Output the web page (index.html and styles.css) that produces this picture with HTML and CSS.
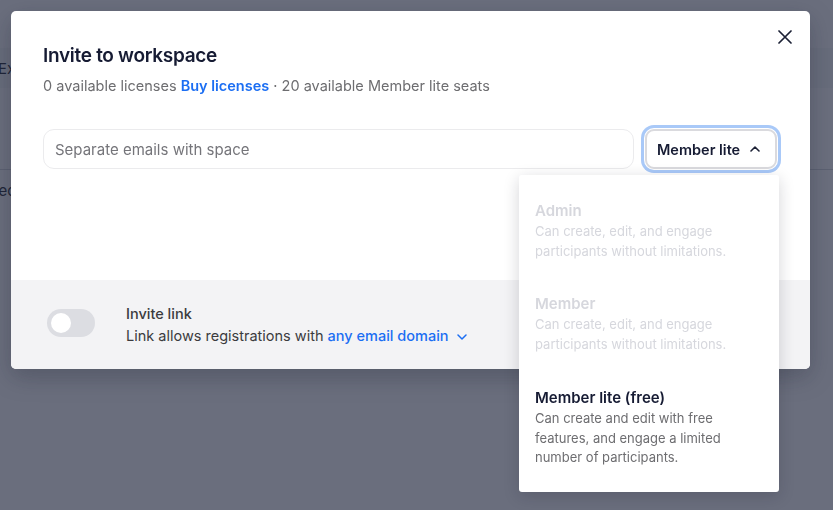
FILE: index.html
```html
<!DOCTYPE html>
<html lang="en">
<head>
<meta charset="utf-8">
<title>Invite to workspace</title>
<link rel="stylesheet" href="styles.css">
</head>
<body>
<div class="page">
  <div class="page-toolbar"><span class="page-text">Export</span></div>
  <div class="page-spacer"></div>
  <div class="page-row"><span class="page-text shifted">Recent</span></div>
</div>
<div class="overlay"></div>

<div class="modal" role="dialog" aria-label="Invite to workspace">
  <div class="modal-body">
    <div class="modal-head">
      <h1 class="title">Invite to workspace</h1>
      <button class="close" aria-label="Close">
        <svg width="14" height="14" viewBox="0 0 14 14"><path d="M1 1L13 13M13 1L1 13" stroke="#1c2135" stroke-width="1.7" stroke-linecap="round"/></svg>
      </button>
    </div>
    <p class="subtitle">0 available licenses <a class="link" href="#">Buy licenses</a> · 20 available Member lite seats</p>
    <div class="invite-row">
      <input class="email-input" type="text" placeholder="Separate emails with space">
      <button class="role-btn">
        <span>Member lite</span>
        <svg width="10" height="6" viewBox="0 0 10 6"><path d="M1 5L5 1L9 5" fill="none" stroke="#1c2135" stroke-width="1.6" stroke-linecap="round" stroke-linejoin="round"/></svg>
      </button>
    </div>
  </div>
  <div class="modal-footer">
    <span class="toggle"><span class="knob"></span></span>
    <div class="link-info">
      <div class="link-title">Invite link</div>
      <div class="link-desc">Link allows registrations with <a class="link" href="#">any email domain</a>
        <svg class="chev" width="10" height="6" viewBox="0 0 10 6"><path d="M1 1L5 5L9 1" fill="none" stroke="#1b6ef3" stroke-width="1.5" stroke-linecap="round" stroke-linejoin="round"/></svg>
      </div>
    </div>
  </div>
</div>

<div class="menu" role="listbox">
  <div class="menu-item disabled">
    <div class="item-title">Admin</div>
    <div class="item-desc">Can create, edit, and engage participants without limitations.</div>
  </div>
  <div class="menu-item disabled">
    <div class="item-title">Member</div>
    <div class="item-desc">Can create, edit, and engage participants without limitations.</div>
  </div>
  <div class="menu-item">
    <div class="item-title">Member lite (free)</div>
    <div class="item-desc">Can create and edit with free features, and engage a limited number of participants.</div>
  </div>
</div>
</body>
</html>
```

FILE: styles.css
```css
* { box-sizing: border-box; }
html, body { margin: 0; padding: 0; }
body {
  width: 833px;
  height: 510px;
  overflow: hidden;
  font-family: Inter, "Noto Sans", sans-serif;
  background: #ffffff;
}

.page {
  height: 510px;
  display: flex;
  flex-direction: column;
  background: #f4f5f7;
}
.page-toolbar {
  margin-top: 48px;
  height: 40px;
  display: flex;
  align-items: center;
  background: #eceef2;
}
.page-text {
  font-size: 15px;
  color: #101426;
  margin-left: -2px;
  white-space: nowrap;
}
.page-text.shifted { margin-left: -11px; }
.page-spacer {
  height: 82px;
  border-bottom: 1px solid #c9ccd4;
}
.page-row {
  height: 40px;
  display: flex;
  align-items: center;
}

.overlay {
  position: fixed;
  inset: 0;
  background: rgba(40, 46, 66, 0.68);
}

.modal {
  position: fixed;
  left: 11px;
  top: 11px;
  width: 799px;
  height: 358px;
  background: #fff;
  border-radius: 5px;
  overflow: hidden;
  display: flex;
  flex-direction: column;
  box-shadow: 0 8px 24px rgba(20, 24, 40, 0.25);
}
.modal-body {
  flex: 1;
  padding: 31px 32px 0 32px;
}
.modal-head {
  display: flex;
  justify-content: space-between;
  align-items: flex-start;
}
.title {
  margin: 0;
  font-size: 19px;
  line-height: 28px;
  font-weight: 600;
  color: #161b33;
  letter-spacing: -0.3px;
}
.close {
  border: 0;
  background: none;
  padding: 0;
  margin: -21px -27px 0 0;
  width: 40px;
  height: 32px;
  display: flex;
  align-items: center;
  justify-content: center;
}
.subtitle {
  margin: 5px 0 0 0;
  font-size: 14.5px;
  line-height: 22px;
  color: #6d6d70;
}
.link {
  color: #1b6ef3;
  font-weight: 600;
  text-decoration: none;
}

.invite-row {
  margin-top: 32px;
  display: flex;
  gap: 11px;
  align-items: center;
}
.email-input {
  flex: 1;
  min-width: 0;
  height: 40px;
  border: 1.5px solid #ebebed;
  border-radius: 11px;
  padding: 0 11px;
  font-family: inherit;
  font-size: 15px;
  color: #222;
  outline: none;
}
.email-input::placeholder { color: #75757a; }
.role-btn {
  flex: 0 0 132px;
  width: 132px;
  height: 40px;
  border: 2px solid #dadade;
  border-radius: 9px;
  background: #fff;
  box-shadow: 0 0 0 1px #fff, 0 0 0 4px #a9c9f8;
  display: flex;
  align-items: center;
  justify-content: space-between;
  padding: 0 15px 0 10px;
  font-family: inherit;
  font-size: 14.5px;
  font-weight: 600;
  color: #161b33;
  white-space: nowrap;
  margin-right: 1px;
}

.modal-footer {
  height: 89px;
  background: #f3f3f5;
  display: flex;
  align-items: center;
  padding-left: 36px;
  gap: 31px;
}
.toggle {
  width: 48px;
  height: 28px;
  margin-top: -3px;
  border-radius: 14px;
  background: #dcdde2;
  display: flex;
  align-items: center;
  padding-left: 4px;
}
.knob {
  width: 20px;
  height: 20px;
  border-radius: 50%;
  background: #fff;
}
.link-info {
  font-size: 14.5px;
  line-height: 22px;
  color: #3b3b3e;
}
.link-title { font-weight: 500; }
.link-desc { display: flex; align-items: center; white-space: pre; }
.link-desc .link { font-weight: 500; }
.chev { margin-left: 8px; margin-top: 2px; }

.menu {
  position: fixed;
  left: 519px;
  top: 175px;
  width: 260px;
  padding: 8px 0;
  background: #fff;
  border-radius: 3px;
  box-shadow: 0 4px 16px rgba(20, 24, 40, 0.18);
}
.menu-item {
  padding: 16px 16px;
}
.item-title {
  font-size: 15px;
  line-height: 22px;
  font-weight: 600;
  color: #161b33;
}
.item-desc {
  font-size: 13px;
  line-height: 19.7px;
  color: #6d6d70;
}
.menu-item:first-child { padding-top: 17px; }
.menu-item.disabled .item-title,
.menu-item.disabled .item-desc { color: #d6d7dd; }
```
